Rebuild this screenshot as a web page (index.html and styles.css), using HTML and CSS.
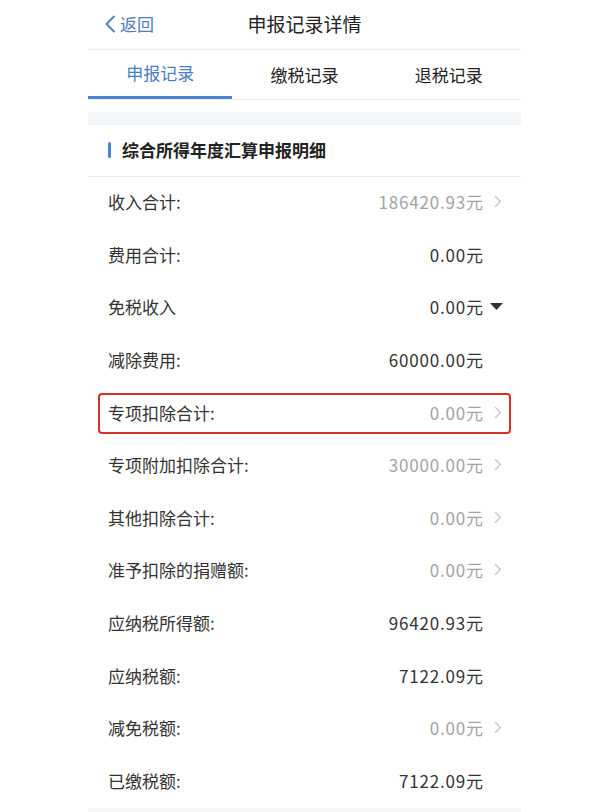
FILE: index.html
```html
<!DOCTYPE html>
<html lang="zh-CN">
<head>
<meta charset="utf-8">
<title>申报记录详情</title>
<link rel="stylesheet" href="styles.css">
</head>
<body>
<div class="page">
  <header class="nav">
    <div class="back">
      <svg class="back-icon" width="12" height="18" viewBox="0 0 12 18"><path d="M10 1.5 L2.5 9 L10 16.5" fill="none" stroke="#4f7dbd" stroke-width="1.8" stroke-linecap="round" stroke-linejoin="round"/></svg>
      <span>返回</span>
    </div>
    <div class="title">申报记录详情</div>
  </header>
  <nav class="tabs">
    <div class="tab active">申报记录</div>
    <div class="tab">缴税记录</div>
    <div class="tab">退税记录</div>
  </nav>
  <div class="gap"></div>
  <div class="band"></div>
  <div class="section-head"><span class="bar"></span><span class="section-title">综合所得年度汇算申报明细</span></div>
  <div class="list">
    <div class="row"><span class="label">收入合计:</span><span class="value light">186420.93元</span><span class="slot"><svg class="chev" width="8" height="13" viewBox="0 0 8 13"><path d="M1.5 1.5 L6.3 6.5 L1.5 11.5" fill="none" stroke="#c9c9c9" stroke-width="1.4" stroke-linecap="round" stroke-linejoin="round"/></svg></span></div>
    <div class="row"><span class="label">费用合计:</span><span class="value">0.00元</span><span class="slot"></span></div>
    <div class="row"><span class="label">免税收入</span><span class="value">0.00元</span><span class="slot"><svg class="tri" width="13" height="7" viewBox="0 0 13 7"><path d="M0 0 H13 L6.5 7 Z" fill="#333"/></svg></span></div>
    <div class="row"><span class="label">减除费用:</span><span class="value">60000.00元</span><span class="slot"></span></div>
    <div class="row marked"><span class="label">专项扣除合计:</span><span class="value light">0.00元</span><span class="slot"><svg class="chev" width="8" height="13" viewBox="0 0 8 13"><path d="M1.5 1.5 L6.3 6.5 L1.5 11.5" fill="none" stroke="#c9c9c9" stroke-width="1.4" stroke-linecap="round" stroke-linejoin="round"/></svg></span></div>
    <div class="row"><span class="label">专项附加扣除合计:</span><span class="value light">30000.00元</span><span class="slot"><svg class="chev" width="8" height="13" viewBox="0 0 8 13"><path d="M1.5 1.5 L6.3 6.5 L1.5 11.5" fill="none" stroke="#c9c9c9" stroke-width="1.4" stroke-linecap="round" stroke-linejoin="round"/></svg></span></div>
    <div class="row"><span class="label">其他扣除合计:</span><span class="value light">0.00元</span><span class="slot"><svg class="chev" width="8" height="13" viewBox="0 0 8 13"><path d="M1.5 1.5 L6.3 6.5 L1.5 11.5" fill="none" stroke="#c9c9c9" stroke-width="1.4" stroke-linecap="round" stroke-linejoin="round"/></svg></span></div>
    <div class="row"><span class="label">准予扣除的捐赠额:</span><span class="value light">0.00元</span><span class="slot"><svg class="chev" width="8" height="13" viewBox="0 0 8 13"><path d="M1.5 1.5 L6.3 6.5 L1.5 11.5" fill="none" stroke="#c9c9c9" stroke-width="1.4" stroke-linecap="round" stroke-linejoin="round"/></svg></span></div>
    <div class="row"><span class="label">应纳税所得额:</span><span class="value">96420.93元</span><span class="slot"></span></div>
    <div class="row"><span class="label">应纳税额:</span><span class="value">7122.09元</span><span class="slot"></span></div>
    <div class="row"><span class="label">减免税额:</span><span class="value light">0.00元</span><span class="slot"><svg class="chev" width="8" height="13" viewBox="0 0 8 13"><path d="M1.5 1.5 L6.3 6.5 L1.5 11.5" fill="none" stroke="#c9c9c9" stroke-width="1.4" stroke-linecap="round" stroke-linejoin="round"/></svg></span></div>
    <div class="row"><span class="label">已缴税额:</span><span class="value">7122.09元</span><span class="slot"></span></div>
  </div>
  <div class="band"></div>
</div>
</body>
</html>
```
FILE: styles.css
```css
html, body {
  margin: 0;
  padding: 0;
  background: #ffffff;
}
body {
  font-family: "Noto Sans CJK SC", "Noto Sans", sans-serif;
  color: #333333;
}
.page {
  width: 433px;
  margin-left: 88px;
}
.nav {
  position: relative;
  height: 50px;
  border-bottom: 1px solid #ebebeb;
  box-sizing: border-box;
  display: flex;
  align-items: center;
  justify-content: center;
  padding-bottom: 2px;
}
.back {
  position: absolute;
  left: 16px;
  top: 0;
  height: 47px;
  display: flex;
  align-items: center;
  gap: 4px;
  color: #4f7dbd;
  font-size: 17px;
}
.back-icon {
  display: block;
}
.title {
  font-size: 19px;
  color: #222;
}
.tabs {
  display: grid;
  grid-template-columns: 1fr 1fr 1fr;
  height: 50px;
  border-bottom: 1px solid #eeeeee;
  box-sizing: border-box;
}
.tab {
  display: flex;
  align-items: center;
  justify-content: center;
  font-size: 17px;
  color: #222;
  box-sizing: border-box;
  padding-bottom: 1px;
}
.tab.active {
  color: #4a7cc4;
  border-bottom: 3px solid #4a84d6;
}
.gap {
  height: 12px;
}
.band {
  height: 13px;
  background: #f5f6f8;
}
.section-head {
  height: 52px;
  border-bottom: 1px solid #eeeeee;
  box-sizing: border-box;
  display: flex;
  align-items: center;
  padding-left: 20px;
  padding-bottom: 2px;
  gap: 11px;
}
.bar {
  width: 3px;
  height: 16px;
  border-radius: 2px;
  background: #4a84d6;
}
.section-title {
  font-size: 17px;
  font-weight: bold;
  color: #222;
}
.row {
  position: relative;
  height: 52.6px;
  box-sizing: border-box;
  display: flex;
  align-items: center;
  padding-left: 20px;
  padding-right: 18px;
  padding-bottom: 3px;
  font-size: 17px;
}
.label {
  flex: 1;
  color: #333;
}
.value {
  color: #333;
  letter-spacing: 0.8px;
  margin-right: -0.8px;
}
.value.light {
  color: #a3a3a3;
}
.slot {
  width: 20px;
  display: flex;
  align-items: center;
  justify-content: flex-end;
}
.chev {
  display: block;
  margin-right: 1px;
}
.tri {
  display: block;
}
.row.marked::after {
  content: "";
  position: absolute;
  left: 10px;
  right: 10px;
  top: 6px;
  bottom: 6px;
  border: 2.5px solid #d6302b;
  border-radius: 4px;
  pointer-events: none;
}
```
